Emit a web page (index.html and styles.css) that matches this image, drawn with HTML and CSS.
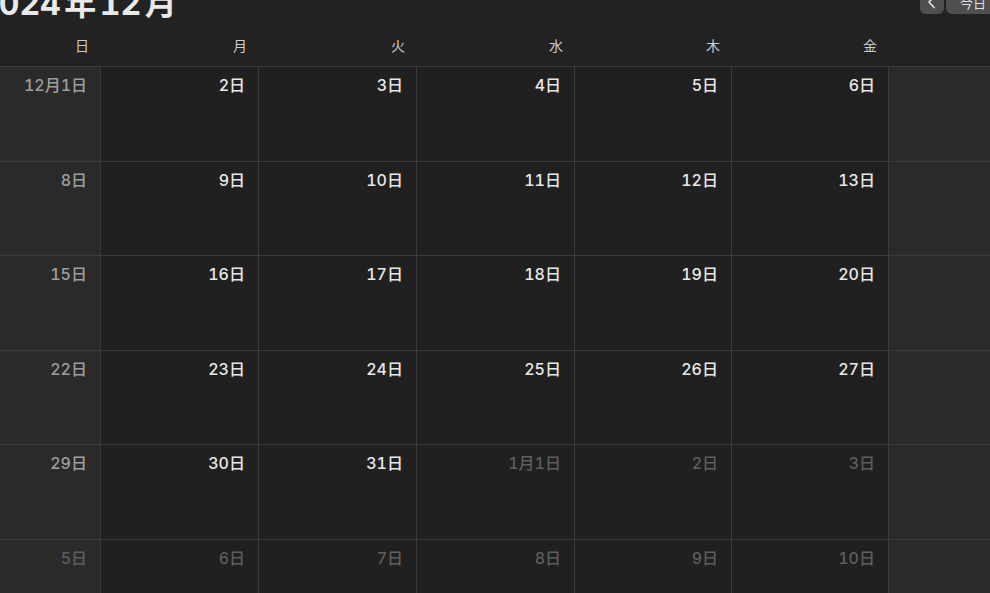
FILE: index.html
```html
<!DOCTYPE html>
<html lang="ja">
<head>
<meta charset="utf-8">
<title>カレンダー</title>
<link rel="stylesheet" href="styles.css">
</head>
<body>
<div class="window">
  <div class="toolbar">
    <h1 class="title">2024<span class="ja">年</span>12<span class="ja">月</span></h1>
    <div class="nav">
      <button class="navbtn arrow" aria-label="前へ"><svg width="9" height="14" viewBox="0 0 9 14"><path d="M7 1.5 L2 7 L7 12.5" fill="none" stroke="#dcdcdc" stroke-width="1.7" stroke-linecap="round" stroke-linejoin="round"/></svg></button>
      <button class="navbtn today">今日</button>
      <button class="navbtn arrow" aria-label="次へ"><svg width="9" height="14" viewBox="0 0 9 14"><path d="M2 1.5 L7 7 L2 12.5" fill="none" stroke="#dcdcdc" stroke-width="1.7" stroke-linecap="round" stroke-linejoin="round"/></svg></button>
    </div>
  </div>
  <div class="weekdays">
    <div class="wd">日</div>
    <div class="wd">月</div>
    <div class="wd">火</div>
    <div class="wd">水</div>
    <div class="wd">木</div>
    <div class="wd">金</div>
    <div class="wd">土</div>
  </div>
  <div class="month">
    <div class="day we cur">12月1日</div>
    <div class="day cur">2日</div>
    <div class="day cur">3日</div>
    <div class="day cur">4日</div>
    <div class="day cur">5日</div>
    <div class="day cur">6日</div>
    <div class="day we cur">7日</div>

    <div class="day we cur">8日</div>
    <div class="day cur">9日</div>
    <div class="day cur">10日</div>
    <div class="day cur">11日</div>
    <div class="day cur">12日</div>
    <div class="day cur">13日</div>
    <div class="day we cur">14日</div>

    <div class="day we cur">15日</div>
    <div class="day cur">16日</div>
    <div class="day cur">17日</div>
    <div class="day cur">18日</div>
    <div class="day cur">19日</div>
    <div class="day cur">20日</div>
    <div class="day we cur">21日</div>

    <div class="day we cur">22日</div>
    <div class="day cur">23日</div>
    <div class="day cur">24日</div>
    <div class="day cur">25日</div>
    <div class="day cur">26日</div>
    <div class="day cur">27日</div>
    <div class="day we cur">28日</div>

    <div class="day we cur">29日</div>
    <div class="day cur">30日</div>
    <div class="day cur">31日</div>
    <div class="day oth">1月1日</div>
    <div class="day oth">2日</div>
    <div class="day oth">3日</div>
    <div class="day we oth">4日</div>

    <div class="day we oth">5日</div>
    <div class="day oth">6日</div>
    <div class="day oth">7日</div>
    <div class="day oth">8日</div>
    <div class="day oth">9日</div>
    <div class="day oth">10日</div>
    <div class="day we oth">11日</div>
  </div>
</div>
</body>
</html>
```

FILE: styles.css
```css
html, body {
  margin: 0;
  padding: 0;
  background: #222222;
  height: 593px;
  overflow: hidden;
}

.window {
  width: 1103px;
  margin-left: -57px;
  font-family: Inter, "Noto Sans CJK JP", sans-serif;
  font-variant-numeric: tabular-nums;
}

.toolbar {
  display: flex;
  align-items: flex-start;
  justify-content: space-between;
  height: 44px;
  margin-top: -14px;
  padding: 0 20px 0 35px;
  box-sizing: border-box;
}

.title {
  margin: 0;
  font-size: 32px;
  font-weight: 700;
  line-height: 36px;
  color: #e9e9e9;
  white-space: nowrap;
}

.ja {
  margin: 0 3.5px;
}

.nav {
  display: flex;
  gap: 2px;
  margin-top: 4px;
}

.navbtn {
  height: 24px;
  border: 0;
  border-radius: 6px;
  background: #4f4f4f;
  color: #dedede;
  font-family: Inter, "Noto Sans CJK JP", sans-serif;
  font-size: 13px;
  padding: 0;
  display: flex;
  align-items: center;
  justify-content: center;
}

.arrow {
  width: 24px;
}

.today {
  padding: 0 14px;
}

.weekdays {
  display: grid;
  grid-template-columns: 158px 158px 158px 158px 157px 157px 157px;
  height: 37px;
  box-sizing: border-box;
  border-bottom: 1px solid #3b3b3b;
}

.wd {
  text-align: right;
  padding: 6px 12px 0 0;
  font-size: 14px;
  line-height: 20px;
  color: #cdcdcd;
}

.month {
  display: grid;
  grid-template-columns: 158px 158px 158px 158px 157px 157px 157px;
  grid-template-rows: repeat(6, 94.6px);
}

.day {
  box-sizing: border-box;
  border-right: 1px solid #3b3b3b;
  border-bottom: 1px solid #3b3b3b;
  background: #202020;
  text-align: right;
  padding: 8px 13px 0 0;
  font-size: 16px;
  line-height: 20px;
  font-weight: 500;
}

.we {
  background: #2a2a2a;
}

.cur {
  color: #e8e8e8;
}

.we.cur {
  color: #9e9e9e;
}

.oth {
  color: #5e5e5e;
}
```
